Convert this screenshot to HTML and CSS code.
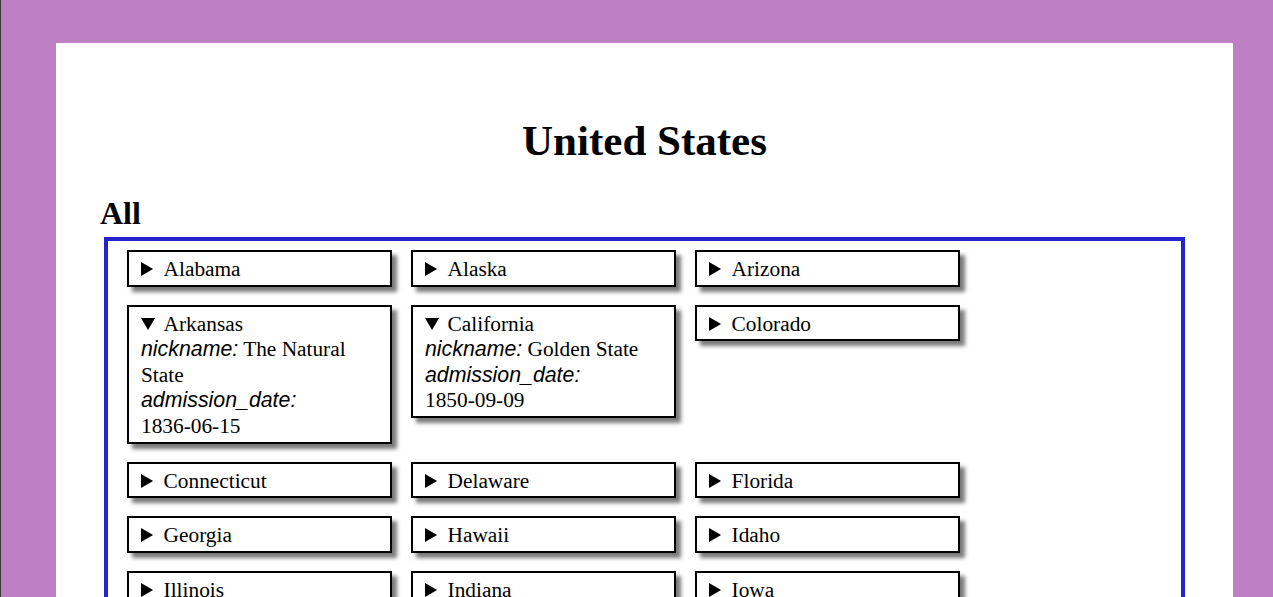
FILE: index.html
```html
<!DOCTYPE html>
<html lang="en">
<head>
<meta charset="utf-8">
<title>United States</title>
<link rel="stylesheet" href="styles.css">
</head>
<body>
<main class="panel">
  <h1 class="title">United States</h1>
  <h2 class="section-title">All</h2>
  <div class="states">
    <details class="card"><summary>Alabama</summary></details>
    <details class="card"><summary>Alaska</summary></details>
    <details class="card"><summary>Arizona</summary></details>
    <details class="card" open><summary>Arkansas</summary>
      <div class="prop"><span class="key">nickname:</span> The Natural State</div>
      <div class="prop"><span class="key">admission_date:</span> <span class="date">1836-06-15</span></div>
    </details>
    <details class="card" open><summary>California</summary>
      <div class="prop"><span class="key">nickname:</span> Golden State</div>
      <div class="prop"><span class="key">admission_date:</span> <span class="date">1850-09-09</span></div>
    </details>
    <details class="card"><summary>Colorado</summary></details>
    <details class="card"><summary>Connecticut</summary></details>
    <details class="card"><summary>Delaware</summary></details>
    <details class="card"><summary>Florida</summary></details>
    <details class="card"><summary>Georgia</summary></details>
    <details class="card"><summary>Hawaii</summary></details>
    <details class="card"><summary>Idaho</summary></details>
    <details class="card"><summary>Illinois</summary></details>
    <details class="card"><summary>Indiana</summary></details>
    <details class="card"><summary>Iowa</summary></details>
    <details class="card"><summary>Kansas</summary></details>
    <details class="card"><summary>Kentucky</summary></details>
    <details class="card"><summary>Louisiana</summary></details>
    <details class="card"><summary>Maine</summary></details>
    <details class="card"><summary>Maryland</summary></details>
    <details class="card"><summary>Massachusetts</summary></details>
    <details class="card"><summary>Michigan</summary></details>
    <details class="card"><summary>Minnesota</summary></details>
    <details class="card"><summary>Mississippi</summary></details>
  </div>
</main>
</body>
</html>
```

FILE: styles.css
```css
html {
  background: #bf7fc5;
}

body {
  margin: 0;
  padding: 43px 40px 0 55px;
  border-left: 1px solid #3a3a3a;
  font-family: "Liberation Serif", "Times New Roman", serif;
  font-size: 21.33px;
  line-height: 1.2;
  color: #000;
}

.panel {
  background: #fff;
  padding: 42px 44px 40px 44px;
}

.title {
  font-size: 43px;
  font-weight: bold;
  line-height: normal;
  text-align: center;
  margin: 31px 0 0 0;
}

.section-title {
  font-size: 32px;
  font-weight: bold;
  line-height: normal;
  margin: 30px 0 5px 0;
}

.states {
  margin: 0 4px;
  border: 4px solid #2323d0;
  padding: 9px 19px 20px 19px;
  display: grid;
  grid-template-columns: repeat(3, 265px);
  column-gap: 19px;
  row-gap: 18px;
  align-items: start;
}

.card {
  border: 2px solid #000;
  padding: 5px 12px 2px 12px;
  box-shadow: 5px 5px 4px #7a7a7a;
  background: #fff;
}

.card summary {
  cursor: pointer;
}

.key {
  font-family: "Liberation Sans", Arial, sans-serif;
  font-style: italic;
}

.date {
  white-space: nowrap;
}
```
